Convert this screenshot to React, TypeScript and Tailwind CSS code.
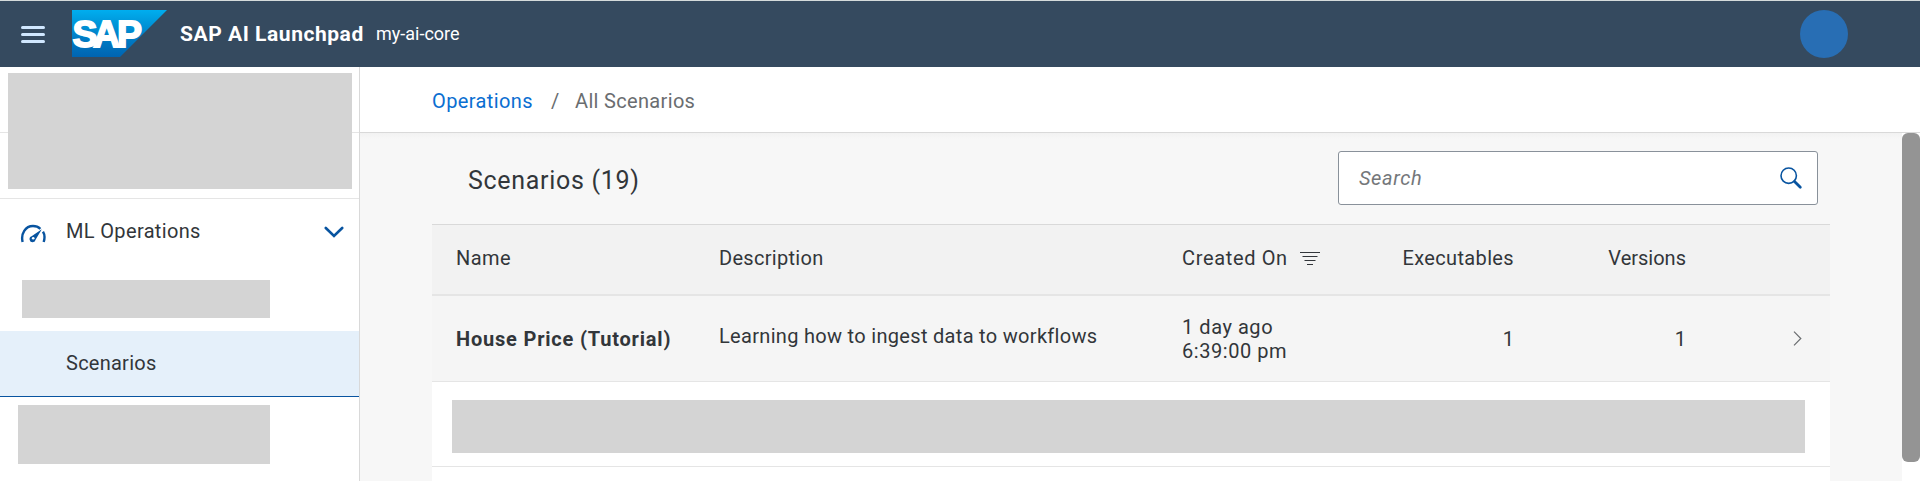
import React from "react";

const Placeholder = ({ className }: { className: string }) => <div className={`bg-[#d4d4d4] ${className}`} />;

function SapLogo() {
  return (
    <svg width="95" height="47" viewBox="0 0 95 47" className="-mt-px ml-[27px] shrink-0">
      <defs>
        <linearGradient id="sap" x1="0" y1="0" x2="0" y2="1">
          <stop offset="0" stopColor="#00aeef" />
          <stop offset="0.25" stopColor="#0099dc" />
          <stop offset="0.6" stopColor="#007cc5" />
          <stop offset="1" stopColor="#0064b1" />
        </linearGradient>
      </defs>
      <path d="M0 0H95L48 47H0Z" fill="url(#sap)" />
      <text x="0.4 21 45" y="36.8" fontFamily="Liberation Sans" fontWeight="700" fontSize="37.5" fill="#fff" stroke="#fff" strokeWidth="1.8">
        SAP
      </text>
    </svg>
  );
}

function Header() {
  return (
    <header className="flex h-[67px] items-center border-t border-[#d5dbdb] bg-[#354a5f] text-white">
      <div className="ml-[21px] flex w-6 flex-col gap-1">
        <div className="h-[3px] rounded-full bg-[#d1e8ff]" />
        <div className="h-[3px] rounded-full bg-[#d1e8ff]" />
        <div className="h-[3px] rounded-full bg-[#d1e8ff]" />
      </div>
      <SapLogo />
      <h1 className="mt-0.5 ml-[13px] w-[196px] text-[21px] font-bold tracking-[0.55px] whitespace-nowrap">SAP AI Launchpad</h1>
      <span className="text-lg whitespace-nowrap">my-ai-core</span>
      <div className="mr-[72px] ml-auto size-12 rounded-full bg-[#286eb4]" />
    </header>
  );
}

function Sidebar() {
  return (
    <aside className="flex h-[414px] w-[360px] shrink-0 flex-col border-r border-[#d9d9d9] bg-white">
      <div className="h-[132px] border-b border-[#e5e5e5] bg-[linear-gradient(#e5e5e5,#e5e5e5)] bg-[length:100%_1px] bg-[position:0_65px] bg-no-repeat pt-1.5 pl-2">
        <Placeholder className="h-[116px] w-[344px]" />
      </div>
      <div className="flex h-[65px] items-center">
        <svg width="26" height="19" viewBox="0 0 26 19" className="mt-1 ml-5 shrink-0" fill="none" stroke="#0854a0" strokeWidth="2.4">
          <path d="M2.6 18C0.6 9.5 5.5 2 13 2C16 2 18.6 3.1 20.4 4.8M23 7.6C24.8 10.5 24.8 14.5 23.7 18" />
          <path d="M21.8 5.2L15.7 15.6A3.1 3.1 0 1 1 11.6 12.2Z" fill="#0854a0" stroke="none" />
          <circle cx="13.2" cy="14.2" r="1.3" fill="#fff" stroke="none" />
        </svg>
        <span className="-mt-0.5 ml-5 text-xl tracking-[0.35px]">ML Operations</span>
        <svg width="20" height="12" viewBox="0 0 20 12" className="mr-[15px] ml-auto" fill="none" stroke="#0854a0" strokeWidth="2.6" strokeLinecap="round">
          <path d="M1.8 2L10 10L18.2 2" />
        </svg>
      </div>
      <div className="h-[67px] pt-4 pl-[22px]">
        <Placeholder className="h-[38px] w-[248px]" />
      </div>
      <div className="flex h-[66px] items-center border-b border-[#0854a0] bg-[#e5f0fa] pb-0.5 pl-[66px] text-xl tracking-[0.25px]">Scenarios</div>
      <Placeholder className="mt-2 ml-[18px] h-[59px] w-[252px]" />
    </aside>
  );
}

const grid = "grid grid-cols-[263px_463px_200px_132px_172px_120px] pl-6";

function Table() {
  return (
    <section className="h-[257px] w-[1398px] border-t border-[#d9d9d9] bg-white text-xl">
      <div className={`${grid} h-[71px] items-center border-b-2 border-[#e5e5e5] bg-[#f2f2f2] pb-[3px]`}>
        <span className="tracking-[0.4px]">Name</span>
        <span className="tracking-[0.3px]">Description</span>
        <div className="flex items-center gap-3">
          <span className="tracking-[0.65px]">Created On</span>
          <svg width="20" height="14" viewBox="0 0 20 14" stroke="#32363a" strokeWidth="1">
            <path d="M0 1.5H20M2.5 5.5H17.5M4.5 9.5H15.5M7 13.5H13" />
          </svg>
        </div>
        <span className="text-right tracking-[0.35px]">Executables</span>
        <span className="text-right">Versions</span>
      </div>
      <div className={`${grid} h-[86px] items-center border-b border-[#e5e5e5] bg-[#f5f5f5]`}>
        <span className="font-bold tracking-[0.8px]">House Price (Tutorial)</span>
        <span className="pb-1.5 tracking-[0.31px]">Learning how to ingest data to workflows</span>
        <div className="leading-6 tracking-[0.55px]">
          <div>1 day ago</div>
          <div>6:39:00 pm</div>
        </div>
        <span className="text-right">1</span>
        <span className="text-right">1</span>
        <svg width="9" height="15" viewBox="0 0 9 15" className="ml-[107px]" fill="none" stroke="#6a6d70" strokeWidth="1.2">
          <path d="M1 0.7L7.8 7.5L1 14.3" />
        </svg>
      </div>
      <div className="h-[85px] border-b border-[#e5e5e5] pt-[18px] pl-5">
        <Placeholder className="h-[53px] w-[1353px]" />
      </div>
    </section>
  );
}

export default function App() {
  return (
    <div className="h-[481px] w-[1920px] overflow-hidden bg-white font-['Roboto','Noto_Sans',sans-serif] text-[#32363a]">
      <Header />
      <div className="flex">
        <Sidebar />
        <main className="flex h-[414px] flex-1 flex-col">
          <nav className="flex h-[66px] shrink-0 items-center border-b border-[#d9d9d9] bg-white pt-0.5 pl-[72px] text-xl text-[#6a6d70]">
            <span className="w-[119px] tracking-[0.4px] text-[#0a6ed1]">Operations</span>
            <span className="w-6">/</span>
            <span className="tracking-[0.33px]">All Scenarios</span>
          </nav>
          <div className="flex flex-1">
            <div className="flex-1 bg-[#f7f7f7] bg-[linear-gradient(#f2f2f2,#f7f7f7)] bg-[length:100%_6px] bg-no-repeat pl-[72px]">
              <div className="flex h-[91px] w-[1398px] items-start justify-between pt-[18px] pr-3 pl-9">
                <h2 className="pt-3 text-[25px] leading-9 tracking-[0.7px]">Scenarios (19)</h2>
                <div className="flex h-[54px] w-[480px] items-center justify-between rounded-[3px] border border-[#89919a] bg-white pr-3.5 pl-5">
                  <span className="text-xl tracking-[0.6px] text-[#74777a] italic">Search</span>
                  <svg width="24" height="24" viewBox="0 0 24 24" fill="none" stroke="#0854a0">
                    <circle cx="9.7" cy="9.7" r="7.7" strokeWidth="1.6" />
                    <path d="M15.5 15.5L21.3 21.3" strokeWidth="2.8" strokeLinecap="round" />
                  </svg>
                </div>
              </div>
              <Table />
            </div>
            <div className="w-[18px] bg-white">
              <div className="h-[329px] rounded-[6px] bg-[#949494]" />
            </div>
          </div>
        </main>
      </div>
    </div>
  );
}
